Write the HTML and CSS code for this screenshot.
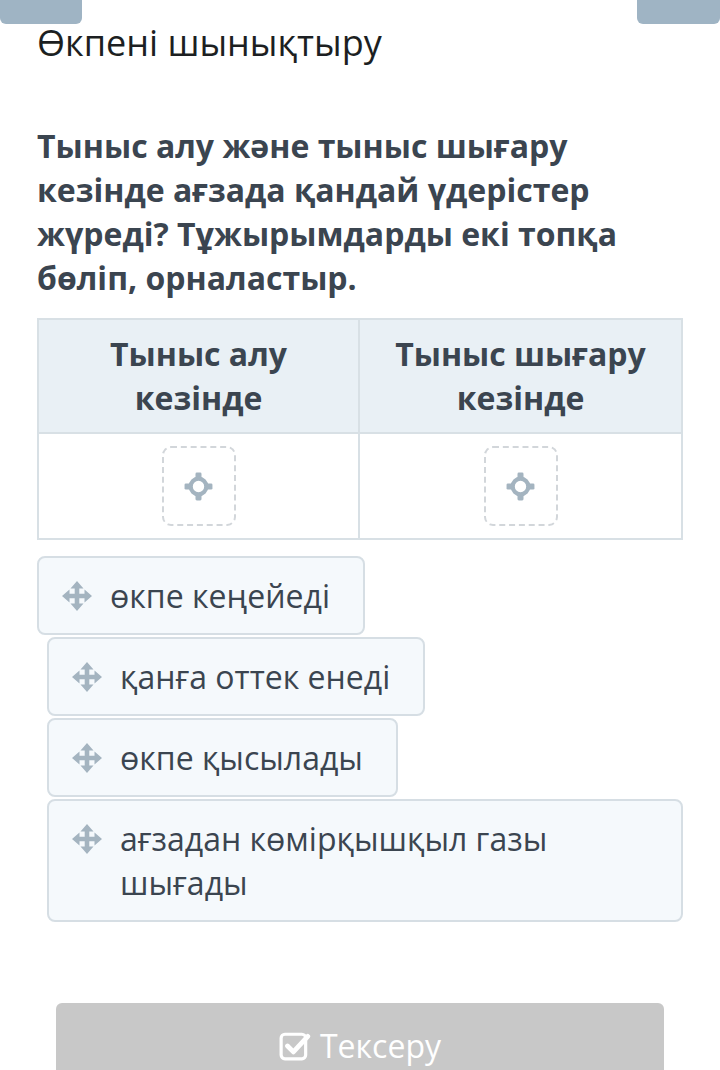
FILE: index.html
```html
<!DOCTYPE html>
<html lang="kk">
<head>
<meta charset="utf-8">
<link rel="stylesheet" href="styles.css">
</head>
<body>
<div class="topbar">
  <div class="tab tab-left"></div>
  <div class="tab tab-right"></div>
</div>
<main class="page">
  <h1 class="title">Өкпені шынықтыру</h1>
  <p class="question">Тыныс алу және тыныс шығару кезінде ағзада қандай үдерістер жүреді? Тұжырымдарды екі топқа бөліп, орналастыр.</p>
  <div class="table">
    <div class="th">Тыныс алу<br>кезінде</div>
    <div class="th">Тыныс шығару<br>кезінде</div>
    <div class="td"><div class="drop"><svg class="target" viewBox="0 0 26 26" width="29" height="29"><circle cx="13" cy="13" r="7" fill="none" stroke="#a4b4c0" stroke-width="3.8"/><rect x="10.3" y="0.5" width="5.4" height="6" rx="1.2" fill="#a4b4c0"/><rect x="10.3" y="19.5" width="5.4" height="6" rx="1.2" fill="#a4b4c0"/><rect x="0.5" y="10.3" width="6" height="5.4" rx="1.2" fill="#a4b4c0"/><rect x="19.5" y="10.3" width="6" height="5.4" rx="1.2" fill="#a4b4c0"/></svg></div></div>
    <div class="td"><div class="drop"><svg class="target" viewBox="0 0 26 26" width="29" height="29"><circle cx="13" cy="13" r="7" fill="none" stroke="#a4b4c0" stroke-width="3.8"/><rect x="10.3" y="0.5" width="5.4" height="6" rx="1.2" fill="#a4b4c0"/><rect x="10.3" y="19.5" width="5.4" height="6" rx="1.2" fill="#a4b4c0"/><rect x="0.5" y="10.3" width="6" height="5.4" rx="1.2" fill="#a4b4c0"/><rect x="19.5" y="10.3" width="6" height="5.4" rx="1.2" fill="#a4b4c0"/></svg></div></div>
  </div>
  <div class="items">
    <div class="item item-first"><svg class="move" viewBox="0 0 32 32" width="32" height="32"><path d="M16 1 L22.5 8.5 H18.3 V13.7 H23.5 V9.5 L31 16 L23.5 22.5 V18.3 H18.3 V23.5 H22.5 L16 31 L9.5 23.5 H13.7 V18.3 H8.5 V22.5 L1 16 L8.5 9.5 V13.7 H13.7 V8.5 H9.5 Z" fill="#a4b4c0"/></svg><span>өкпе кеңейеді</span></div>
    <div class="item"><svg class="move" viewBox="0 0 32 32" width="32" height="32"><path d="M16 1 L22.5 8.5 H18.3 V13.7 H23.5 V9.5 L31 16 L23.5 22.5 V18.3 H18.3 V23.5 H22.5 L16 31 L9.5 23.5 H13.7 V18.3 H8.5 V22.5 L1 16 L8.5 9.5 V13.7 H13.7 V8.5 H9.5 Z" fill="#a4b4c0"/></svg><span>қанға оттек енеді</span></div>
    <div class="item"><svg class="move" viewBox="0 0 32 32" width="32" height="32"><path d="M16 1 L22.5 8.5 H18.3 V13.7 H23.5 V9.5 L31 16 L23.5 22.5 V18.3 H18.3 V23.5 H22.5 L16 31 L9.5 23.5 H13.7 V18.3 H8.5 V22.5 L1 16 L8.5 9.5 V13.7 H13.7 V8.5 H9.5 Z" fill="#a4b4c0"/></svg><span>өкпе қысылады</span></div>
    <div class="item item-wide"><svg class="move" viewBox="0 0 32 32" width="32" height="32"><path d="M16 1 L22.5 8.5 H18.3 V13.7 H23.5 V9.5 L31 16 L23.5 22.5 V18.3 H18.3 V23.5 H22.5 L16 31 L9.5 23.5 H13.7 V18.3 H8.5 V22.5 L1 16 L8.5 9.5 V13.7 H13.7 V8.5 H9.5 Z" fill="#a4b4c0"/></svg><span>ағзадан көмірқышқыл газы шығады</span></div>
  </div>
  <div class="actions">
    <button class="check-btn"><svg class="check" viewBox="0 0 30 30" width="32" height="32"><rect x="2" y="4" width="23" height="23" rx="3.5" fill="none" stroke="#fff" stroke-width="3"/><path d="M8 15 L13.5 20.5 L27 6" fill="none" stroke="#fff" stroke-width="4.5" stroke-linecap="round" stroke-linejoin="round"/></svg><span>Тексеру</span></button>
  </div>
</main>
</body>
</html>
```

FILE: styles.css
```css
* { box-sizing: border-box; }
html, body { margin: 0; padding: 0; background: #fff; }
body {
  font-family: "Open Sans", "Noto Sans", sans-serif;
  color: #3b4550;
  width: 720px;
  overflow: hidden;
}
.topbar {
  display: flex;
  justify-content: space-between;
  height: 24px;
}
.tab {
  height: 24px;
  background: #9fb4c4;
  border-radius: 0 0 6px 6px;
}
.tab-left { width: 82px; }
.tab-right { width: 83px; }
.page {
  padding: 0 37px;
}
.title {
  margin: 0;
  font-weight: 400;
  font-size: 36px;
  line-height: 38px;
  color: #1c1f22;
}
.question {
  margin: 62px 0 0;
  font-weight: 700;
  font-size: 32px;
  line-height: 44px;
}
.table {
  margin-top: 18px;
  display: grid;
  grid-template-columns: 1fr 1fr;
  border: 2px solid #d8e0e5;
  width: 646px;
}
.th {
  background: #e9f0f5;
  font-weight: 700;
  font-size: 32px;
  line-height: 44px;
  text-align: center;
  padding: 12px 6px;
  border-bottom: 2px solid #d8e0e5;
}
.th:first-child, .td:nth-child(3) { border-right: 2px solid #d8e0e5; }
.td {
  height: 104px;
  display: flex;
  align-items: center;
  justify-content: center;
}
.drop {
  width: 74px;
  height: 80px;
  border: 2px dashed #d2d6da;
  border-radius: 9px;
  display: flex;
  align-items: center;
  justify-content: center;
}
.items {
  margin-top: 16px;
  display: flex;
  flex-direction: column;
  align-items: flex-start;
  gap: 2px;
}
.item {
  display: flex;
  align-items: flex-start;
  gap: 17px;
  background: #f5f9fc;
  border: 2px solid #d6dee4;
  border-radius: 8px;
  padding: 16px 33px 15px 22px;
  font-size: 32px;
  line-height: 44px;
  margin-left: 10px;
  color: #3b4550;
}
.item-first { margin-left: 0; }
.item-wide { width: 636px; }
.move { flex: none; margin-top: 6px; }
.actions {
  margin-top: 81px;
  padding: 0 19px;
}
.check-btn {
  width: 608px;
  height: 100px;
  border: none;
  border-radius: 6px;
  background: #c8c8c8;
  color: #fff;
  font-family: "Open Sans", "Noto Sans", sans-serif;
  font-size: 32px;
  line-height: 44px;
  display: flex;
  align-items: flex-start;
  justify-content: center;
  gap: 9px;
  padding: 21px 0 0;
}
.check { margin-top: 6px; }
```
